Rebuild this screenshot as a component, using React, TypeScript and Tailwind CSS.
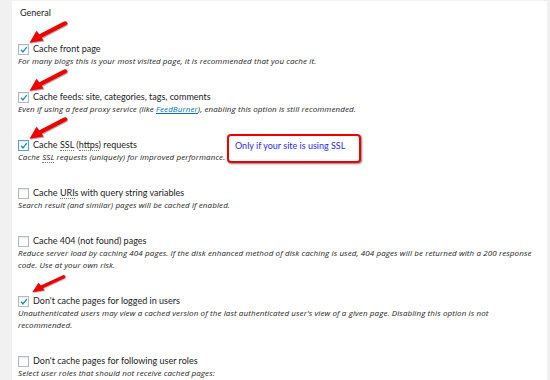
import React from "react";

const Check = ({ checked, focus }: { checked?: boolean; focus?: boolean }) => (
  <span
    className={`relative inline-block w-[11px] h-[11px] shrink-0 border bg-white ${
      focus ? "border-[#5b9dd9] shadow-[0_0_2px_rgba(30,140,190,0.8)]" : "border-[#b4b9be]"
    } shadow-[inset_0_1px_2px_rgba(0,0,0,0.1)]`}
  >
    {checked && (
      <svg viewBox="0 0 11 11" className="absolute left-[0px] top-[0px] w-[10px] h-[10px]">
        <path d="M2.3 5.3 L4.3 7.6 L8.6 2.4" fill="none" stroke="#1e8cbe" strokeWidth="1.5" />
      </svg>
    )}
  </span>
);

const Arrow = ({ x, y, w, h }: { x: number; y: number; w: number; h: number }) => (
  <svg
    className="absolute"
    style={{ left: x, top: y, width: w, height: h }}
    viewBox="0 0 40 26"
    preserveAspectRatio="none"
  >
    <defs>
      <filter id="sh" x="-20%" y="-20%" width="140%" height="140%">
        <feDropShadow dx="0.8" dy="0.8" stdDeviation="0.6" floodColor="#000" floodOpacity="0.45" />
      </filter>
    </defs>
    <g filter="url(#sh)">
      <path d="M37 2.5 L11 17" stroke="#ee0000" strokeWidth="4.5" strokeLinecap="round" fill="none" />
      <path d="M1.5 23.5 L8.5 10.5 L15.5 21 Z" fill="#ee0000" />
    </g>
  </svg>
);

const Item = ({
  checked,
  focus,
  label,
  desc,
  className = "",
}: {
  checked?: boolean;
  focus?: boolean;
  label: React.ReactNode;
  desc: React.ReactNode;
  className?: string;
}) => (
  <div className={className}>
    <label
      className="flex items-center h-[12px] gap-[4px] text-[9px] leading-[12px] text-[#222]"
      style={{ fontFamily: "Lato, sans-serif" }}
    >
      <Check checked={checked} focus={focus} />
      <span>{label}</span>
    </label>
    <p className="text-[8px] leading-[12px] italic text-[#222] pr-[10px] tracking-[0.1px]">{desc}</p>
  </div>
);

const Abbr = ({ children }: { children: React.ReactNode }) => (
  <span className="border-b border-dotted border-[#777]">{children}</span>
);

export default function App() {
  return (
    <div
      className="w-[550px] h-[380px] bg-[#f1f1f1] overflow-hidden flex pt-[1px]"
      style={{ fontFamily: '"Open Sans", "Noto Sans", sans-serif' }}
    >
      <div className="relative ml-[12px] mr-[3px] flex-1 bg-white pl-[6px] pt-[6px]">
        <div
          className="text-[9px] leading-[12px] text-[#222] ml-[2px]"
          style={{ fontFamily: "Lato, sans-serif" }}
        >
          General
        </div>
        <div className="mt-[24px] flex flex-col gap-[24px]">
          <Item
            checked
            label="Cache front page"
            desc="For many blogs this is your most visited page, it is recommended that you cache it."
          />
          <Item
            checked
            label="Cache feeds: site, categories, tags, comments"
            desc={
              <>
                Even if using a feed proxy service (like{" "}
                <span className="text-[#0073aa] underline">FeedBurner</span>), enabling this option is still
                recommended.
              </>
            }
          />
          <Item
            checked
            focus
            label={
              <>
                Cache <Abbr>SSL</Abbr> (<Abbr>https</Abbr>) requests
              </>
            }
            desc={
              <>
                Cache <Abbr>SSL</Abbr> requests (uniquely) for improved performance.
              </>
            }
          />
          <Item
            label={
              <>
                Cache <Abbr>URI</Abbr>s with query string variables
              </>
            }
            desc="Search result (and similar) pages will be cached if enabled."
          />
          <Item
            label="Cache 404 (not found) pages"
            desc="Reduce server load by caching 404 pages. If the disk enhanced method of disk caching is used, 404 pages will be returned with a 200 response code. Use at your own risk."
          />
          <Item
            checked
            label="Don't cache pages for logged in users"
            desc="Unauthenticated users may view a cached version of the last authenticated user's view of a given page. Disabling this option is not recommended."
          />
          <Item
            label="Don't cache pages for following user roles"
            desc="Select user roles that should not receive cached pages:"
          />
        </div>

        <div
          className="absolute left-[215px] top-[133px] w-[134px] h-[29px] border-[2px] border-[#ee0000] rounded-[4px] bg-white shadow-[1px_1px_2px_rgba(0,0,0,0.5)] pl-[6px] pt-[3px] whitespace-nowrap text-[9px] leading-[14px] text-[#2a2ae8]"
          style={{ fontFamily: "Lato, sans-serif" }}
        >
          Only if your site is using SSL
        </div>

        <Arrow x={16} y={20} w={40} h={24} />
        <Arrow x={16} y={68} w={40} h={24} />
        <Arrow x={16} y={116} w={40} h={24} />
        <Arrow x={19} y={274} w={35} h={19} />
      </div>
    </div>
  );
}
